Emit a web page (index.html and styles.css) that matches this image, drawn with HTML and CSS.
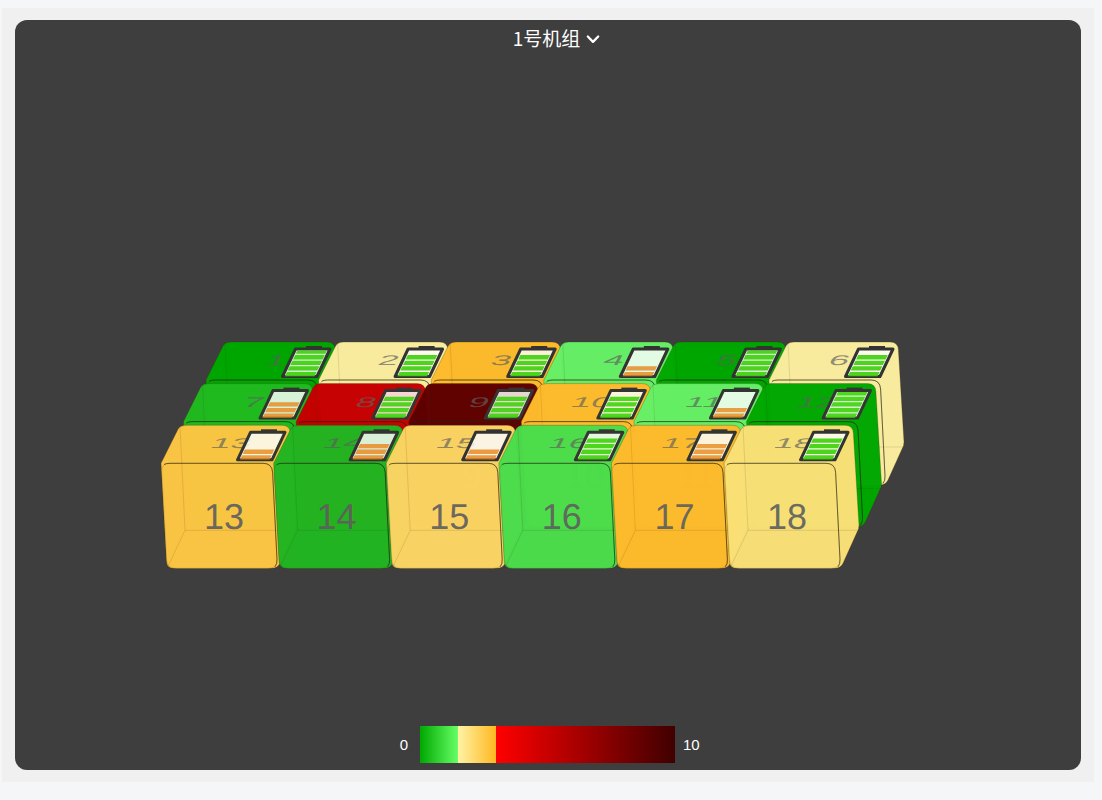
FILE: index.html
```html
<!DOCTYPE html>
<html lang="zh">
<head>
<meta charset="utf-8">
<title>1号机组</title>
<link rel="stylesheet" href="styles.css">
</head>
<body>
<main class="panel">
  <section class="card">
    <header class="head">
      <span class="title">1号机组</span>
      <svg class="chev" viewBox="0 0 14 10" width="14" height="10"><path d="M1.800 2.500 7 7.900 12.200 2.500"/></svg>
    </header>
    <svg class="stage" width="1066" height="670" viewBox="15 56 1066 670">
      <defs>
        <g id="box">
          <path class="sil" d="M0 0 17 -34Q19 -38 25 -38H121Q129 -38 129.400 -30L135 62Q135 66 133 69L119 100Q117 105 110 105H13Q6 105 5.600 99Z"/>
          <path class="front" d="M9 0H102Q111 0 111.600 9L116 96Q116.400 105 107 105H15Q6 105 5.600 96L0.800 9Q0 0 9 0Z"/>
          <path class="inner" d="M19 -38 24 67M6 105 24 67H135"/>
          <path class="edge" d="M3 1.200Q5 0 9 0H102Q111 0 111.600 9L116 96Q116.300 101 114 103.500"/>
        </g>
        <path id="batt" d="M76.500 -3.500 89.500 -31H124L111 -3.500Z"/>
        <path id="cap" d="M100 -34H116V-31H100Z"/>
        <path id="b5" d="M79 -3.800h29.500l2.100 -4.300h-29.500zM81.700 -9.400h29.500l2.100 -4.300h-29.500zM84.400 -15h29.500l2.100 -4.300h-29.500zM87.100 -20.600h29.500l2.100 -4.300h-29.500zM89.800 -26.200h29.500l1.600 -3.300h-29.500z"/>
        <path id="b4" d="M79 -3.800h29.500l2.100 -4.300h-29.500zM81.700 -9.400h29.500l2.100 -4.300h-29.500zM84.400 -15h29.500l2.100 -4.300h-29.500zM87.100 -20.600h29.500l2.100 -4.300h-29.500z"/>
        <path id="b3" d="M79 -3.800h29.500l2.100 -4.300h-29.500zM81.700 -9.400h29.500l2.100 -4.300h-29.500zM84.400 -15h29.500l2.100 -4.300h-29.500z"/>
        <path id="b2" d="M79 -3.800h29.500l2.100 -4.300h-29.500zM81.700 -9.400h29.500l2.100 -4.300h-29.500z"/>
      </defs>

      <g class="cube g0" transform="translate(206 380)"><use href="#box"/><text class="num">1</text><text class="lab">1</text><use class="shell" href="#batt"/><use class="capx" href="#cap"/><use class="bg" href="#b5"/></g>
      <g class="cube y1" transform="translate(318.600 380)"><use href="#box"/><text class="num">2</text><text class="lab">2</text><use class="shell" href="#batt"/><use class="capx" href="#cap"/><use class="bg" href="#b4"/></g>
      <g class="cube a2" transform="translate(431.200 380)"><use href="#box"/><text class="num">3</text><text class="lab">3</text><use class="shell" href="#batt"/><use class="capx" href="#cap"/><use class="bg" href="#b4"/></g>
      <g class="cube g4" transform="translate(543.800 380)"><use href="#box"/><text class="num">4</text><text class="lab">4</text><use class="shell" href="#batt"/><use class="capx" href="#cap"/><use class="bo" href="#b2"/></g>
      <g class="cube g0" transform="translate(656.400 380)"><use href="#box"/><text class="num">5</text><text class="lab">5</text><use class="shell" href="#batt"/><use class="capx" href="#cap"/><use class="bg" href="#b5"/></g>
      <g class="cube y1" transform="translate(769 380)"><use href="#box"/><text class="num">6</text><text class="lab">6</text><use class="shell" href="#batt"/><use class="capx" href="#cap"/><use class="bg" href="#b4"/></g>

      <g class="cube g1" transform="translate(183.500 421.600)"><use href="#box"/><text class="num">7</text><text class="lab">7</text><use class="shell" href="#batt"/><use class="capx" href="#cap"/><use class="bo" href="#b3"/></g>
      <g class="cube r1" transform="translate(296.100 421.600)"><use href="#box"/><text class="num">8</text><text class="lab">8</text><use class="shell" href="#batt"/><use class="capx" href="#cap"/><use class="bg" href="#b4"/></g>
      <g class="cube r2" transform="translate(408.700 421.600)"><use href="#box"/><text class="num">9</text><text class="lab">9</text><use class="shell" href="#batt"/><use class="capx" href="#cap"/><use class="bg" href="#b4"/></g>
      <g class="cube a2" transform="translate(521.300 421.600)"><use href="#box"/><text class="num">10</text><text class="lab">10</text><use class="shell" href="#batt"/><use class="capx" href="#cap"/><use class="bg" href="#b4"/></g>
      <g class="cube g4" transform="translate(633.900 421.600)"><use href="#box"/><text class="num">11</text><text class="lab">11</text><use class="shell" href="#batt"/><use class="capx" href="#cap"/><use class="bo" href="#b2"/></g>
      <g class="cube g0" transform="translate(746.500 421.600)"><use href="#box"/><text class="num">12</text><text class="lab">12</text><use class="shell" href="#batt"/><use class="capx" href="#cap"/><use class="bg" href="#b5"/></g>

      <g class="cube a1" transform="translate(161 463.300)"><use href="#box"/><text class="num">13</text><text class="lab">13</text><use class="shell" href="#batt"/><use class="capx" href="#cap"/><use class="bo" href="#b2"/></g>
      <g class="cube g2" transform="translate(273.600 463.300)"><use href="#box"/><text class="num">14</text><text class="lab">14</text><use class="shell" href="#batt"/><use class="capx" href="#cap"/><use class="bo" href="#b3"/></g>
      <g class="cube y3" transform="translate(386.200 463.300)"><use href="#box"/><text class="num">15</text><text class="lab">15</text><use class="shell" href="#batt"/><use class="capx" href="#cap"/><use class="bo" href="#b2"/></g>
      <g class="cube g3" transform="translate(498.800 463.300)"><use href="#box"/><text class="num">16</text><text class="lab">16</text><use class="shell" href="#batt"/><use class="capx" href="#cap"/><use class="bg" href="#b4"/></g>
      <g class="cube a2" transform="translate(611.400 463.300)"><use href="#box"/><text class="num">17</text><text class="lab">17</text><use class="shell" href="#batt"/><use class="capx" href="#cap"/><use class="bo" href="#b3"/></g>
      <g class="cube y2" transform="translate(724 463.300)"><use href="#box"/><text class="num">18</text><text class="lab">18</text><use class="shell" href="#batt"/><use class="capx" href="#cap"/><use class="bg" href="#b4"/></g>
    </svg>
    <footer class="legend">
      <span class="tick tick-low">0</span>
      <div class="ramp"></div>
      <span class="tick tick-high">10</span>
    </footer>
  </section>
</main>
</body>
</html>
```
FILE: styles.css
```css
html, body { margin: 0; height: 100%; }
body {
  background: #f5f6f8;
  font-family: "Liberation Sans", Arial, sans-serif;
  padding-top: 8px;
  box-sizing: border-box;
}
.panel {
  margin-left: 2px;
  width: 1092px;
  height: 774px;
  background: #f0f0f0;
  padding: 12px 13px;
  box-sizing: border-box;
}
.card {
  width: 1066px;
  height: 750px;
  background: #3e3e3e;
  border-radius: 12px;
  display: flex;
  flex-direction: column;
  overflow: hidden;
}
.head {
  height: 36px;
  display: flex;
  align-items: center;
  justify-content: center;
  gap: 6px;
  padding-left: 17px;
  color: #fff;
  flex: none;
}
.title {
  font-family: "Noto Sans CJK SC", "Liberation Sans", sans-serif;
  font-size: 19px;
  font-weight: 400;
  line-height: 36px;
}
.chev { fill: none; stroke: #fff; stroke-width: 2.300; stroke-linecap: round; stroke-linejoin: round; margin-top: 2px; }
.stage { display: block; flex: none; }
.legend {
  flex: none;
  display: flex;
  align-items: center;
  justify-content: center;
  gap: 8px;
  height: 37px;
  margin-bottom: 7px;
  color: #fff;
  font-size: 15px;
}
.tick { width: 30px; }
.tick-low { text-align: right; margin-right: 4px; }
.tick-high { margin-right: 5px; }
.ramp {
  width: 255px;
  height: 37px;
  background: linear-gradient(90deg,
    #00a800 0, #66ff66 38px,
    #fff3a6 38px, #ffb820 76px,
    #ff0000 76px, #400000 255px);
}

/* cube palette */
.g0 { --c: #00a800; }
.g1 { --c: #1fbb1f; }
.g2 { --c: #22b522; }
.g3 { --c: #4bdd4b; }
.g4 { --c: #66f066; }
.y1 { --c: #fbee9f; }
.y2 { --c: #fae077; }
.y3 { --c: #fbd563; }
.a1 { --c: #fcc644; }
.a2 { --c: #febb2c; }
.r1 { --c: #c60000; }
.r2 { --c: #5e0000; }

.cube { opacity: .985; }
.sil { fill: var(--c); stroke: rgba(60, 50, 10, .4); stroke-width: .7; }
.inner { fill: none; stroke: rgba(60, 40, 0, .14); stroke-width: .9; }
.front { fill: var(--c); stroke: rgba(70, 60, 20, .25); stroke-width: .7; }
.edge { fill: none; stroke: rgba(30, 30, 20, .7); stroke-width: .9; }
.num, .lab {
  font-family: "Liberation Sans", Arial, sans-serif;
  font-size: 36px;
  fill: #5f5f5f;
  text-anchor: middle;
  text-rendering: geometricPrecision;
}
.num { fill-opacity: .92; transform: translate(63px, 66px); }
.lab { fill-opacity: .68; transform: matrix(1, 0, -.2, .39, 68, -15); }
.shell { fill: rgba(255, 255, 255, .84); stroke: #333; stroke-width: 3; stroke-linejoin: round; }
.capx { fill: #333; }
.bg { fill: #46d414; fill-opacity: .95; }
.bo { fill: #ea8a20; fill-opacity: .82; }
```
